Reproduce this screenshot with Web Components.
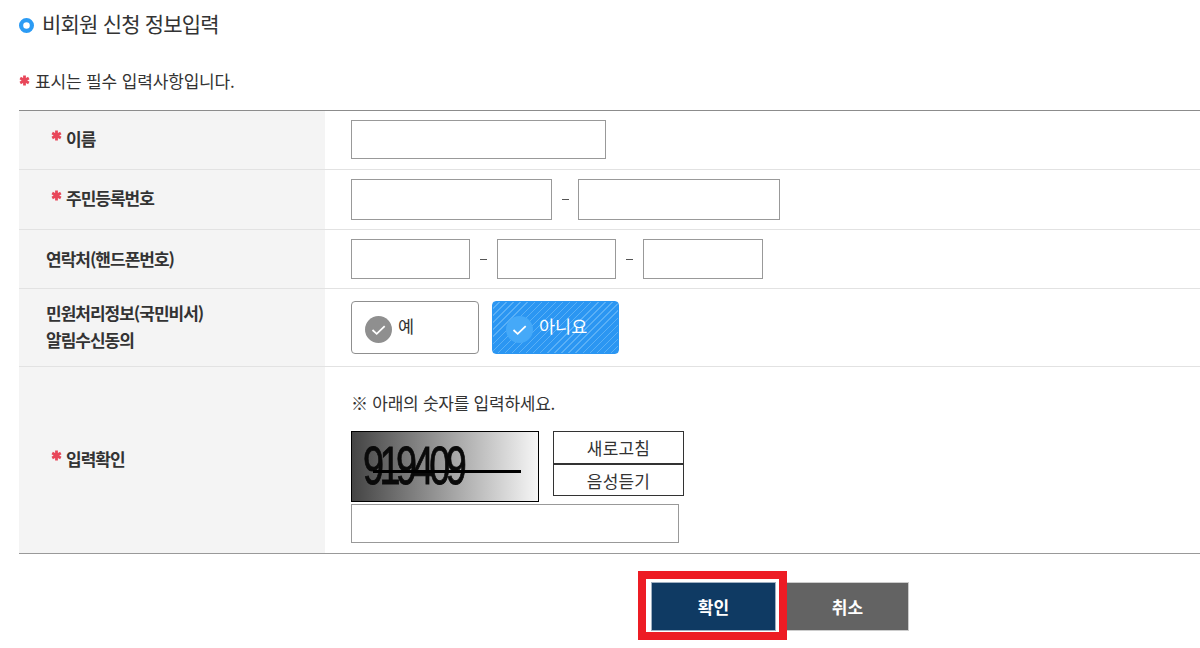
<!DOCTYPE html>
<html lang="ko">
<head>
<meta charset="utf-8">
<title>비회원 신청 정보입력</title>
<style>
  html, body { margin: 0; padding: 0; background: #fff; }
  body { font-family: "Noto Sans CJK KR", "Noto Sans", sans-serif; color: #333; overflow: hidden; height: 648px; }
  apply-form { display: block; }
</style>
</head>
<body>
<apply-form>
  <req-note></req-note>
  <form-row label="이름" required h="59" lift="1">
    <text-box w="255" h="39"></text-box>
  </form-row>
  <form-row label="주민등록번호" required h="60">
    <text-box w="201" h="41"></text-box><dash-mark w="26"></dash-mark><text-box w="202" h="41"></text-box>
  </form-row>
  <form-row label="연락처(핸드폰번호)" h="59" drop="2">
    <text-box w="119" h="40"></text-box><dash-mark w="27"></dash-mark><text-box w="119" h="40"></text-box><dash-mark w="27"></dash-mark><text-box w="120" h="40"></text-box>
  </form-row>
  <form-row label="민원처리정보(국민비서)<br>알림수신동의" h="78" gap="13">
    <choice-btn>예</choice-btn><choice-btn on>아니요</choice-btn>
  </form-row>
  <form-row label="입력확인" required h="186" last>
    <captcha-box></captcha-box>
  </form-row>
</apply-form>
<btn-bar></btn-bar>

<script>
const STAR = `<svg width="11" height="11" viewBox="0 0 11 11"><g stroke="#e8475a" stroke-width="2.8" stroke-linecap="butt"><path d="M5.5 .6v9.8M1.2 3l8.6 5M9.8 3L1.2 8"/></g></svg>`;

class ApplyForm extends HTMLElement {
  constructor() {
    super();
    this.attachShadow({ mode: 'open' });
    this.shadowRoot.innerHTML = `
      <style>
        :host { display: block; padding-left: 19px; }
        h2 { margin: 0; height: 46px; display: flex; align-items: center; gap: 8px; font-size: 21px; font-weight: 400; letter-spacing: -0.8px; color: #333; }
        .dot { display: block; margin-top: 4px; flex: none; }
        .tbl { border-top: 1px solid #8c8c8c; border-bottom: 1px solid #999; }
      </style>
      <h2><svg class="dot" width="15" height="15" viewBox="0 0 15 15"><circle cx="7.5" cy="7.5" r="5.4" fill="none" stroke="#2b9bf4" stroke-width="4.2"/></svg>비회원 신청 정보입력</h2>
      <slot name="note"></slot>
      <div class="tbl"><slot></slot></div>`;
  }
  connectedCallback() {
    const note = this.querySelector('req-note');
    if (note) note.slot = 'note';
  }
}
customElements.define('apply-form', ApplyForm);

class ReqNote extends HTMLElement {
  constructor() {
    super();
    this.attachShadow({ mode: 'open' });
    this.shadowRoot.innerHTML = `
      <style>
        :host { display: flex; align-items: center; gap: 5px; height: 64px; padding-top: 5px; box-sizing: border-box; font-size: 17px; letter-spacing: -0.15px; color: #333; }
        svg { display: block; }
      </style>${STAR}<span>표시는 필수 입력사항입니다.</span>`;
  }
}
customElements.define('req-note', ReqNote);

class FormRow extends HTMLElement {
  constructor() {
    super();
    this.attachShadow({ mode: 'open' });
  }
  connectedCallback() {
    const req = this.hasAttribute('required');
    const h = this.getAttribute('h');
    const gap = this.getAttribute('gap') || 0;
    const lift = this.getAttribute('lift') || 0;
    const pad = 4 - (this.getAttribute('drop') || 0);
    this.shadowRoot.innerHTML = `
      <style>
        :host { display: grid; grid-template-columns: 306px 1fr; height: ${h}px; box-sizing: border-box; ${this.hasAttribute('last') ? '' : 'border-bottom: 1px solid #e2e2e2;'} }
        .th { background: #f4f4f4; display: flex; align-items: center; padding: 0 0 ${pad}px ${req ? 32 : 27}px; gap: 4px; font-size: 17px; font-weight: 700; letter-spacing: -1px; line-height: 27px; color: #333; }
        .th svg { margin-top: -5px; flex: none; }
        .td { display: flex; align-items: center; padding: 0 0 ${lift}px 26px; gap: ${gap}px; }
      </style>
      <div class="th">${req ? STAR : ''}<span>${this.getAttribute('label')}</span></div>
      <div class="td"><slot></slot></div>`;
  }
}
customElements.define('form-row', FormRow);

class TextBox extends HTMLElement {
  constructor() {
    super();
    this.attachShadow({ mode: 'open' });
  }
  connectedCallback() {
    this.shadowRoot.innerHTML = `
      <style>
        :host { display: block; width: ${this.getAttribute('w')}px; height: ${this.getAttribute('h')}px; box-sizing: border-box; border: 1px solid #999; background: #fff; }
      </style>`;
  }
}
customElements.define('text-box', TextBox);

class DashMark extends HTMLElement {
  constructor() {
    super();
    this.attachShadow({ mode: 'open' });
  }
  connectedCallback() {
    this.shadowRoot.innerHTML = `
      <style>
        :host { display: flex; width: ${this.getAttribute('w')}px; justify-content: center; }
        i { display: block; width: 7px; height: 1px; background: #555; }
      </style><i></i>`;
  }
}
customElements.define('dash-mark', DashMark);

class ChoiceBtn extends HTMLElement {
  constructor() {
    super();
    this.attachShadow({ mode: 'open' });
    this.shadowRoot.innerHTML = `
      <style>
        :host { display: flex; align-items: flex-start; gap: 6px; width: 128px; height: 53px; box-sizing: border-box; padding: 13px 0 0 13px; border: 1px solid #8f8f8f; border-radius: 4px; background: #fff; font-size: 17.5px; color: #333; }
        :host([on]) { width: 127px; border-color: #2b96f2; color: #fff; background: repeating-linear-gradient(135deg, #2b96f2 0 4px, #5ab0f6 4px 5px); }
        svg { display: block; flex: none; margin-top: 1px; }
        span { line-height: 24px; margin-top: -1px; }
        .c { fill: #8f8f8f; }
        :host([on]) .c { fill: #45a9f8; }
      </style>
      <svg width="27" height="27" viewBox="0 0 27 27"><circle class="c" cx="13.5" cy="13.5" r="13.5"/><path d="M7.5 14l4.2 3.8 8-7.6" fill="none" stroke="#fff" stroke-width="1.8"/></svg>
      <span><slot></slot></span>`;
  }
}
customElements.define('choice-btn', ChoiceBtn);

class CaptchaBox extends HTMLElement {
  constructor() {
    super();
    this.attachShadow({ mode: 'open' });
    this.shadowRoot.innerHTML = `
      <style>
        :host { display: block; font-size: 17px; color: #333; padding-top: 14px; }
        .tip { height: 24px; line-height: 24px; margin: 0 0 16px; letter-spacing: -0.25px; }
        .top { display: flex; gap: 14px; align-items: flex-start; }
        .img { position: relative; width: 188px; height: 71px; box-sizing: border-box; border: 1px solid #000; overflow: hidden; background: linear-gradient(90deg, #444, #f6f6f6); }
        .img b { position: absolute; left: 11px; top: 10px; font-family: "Liberation Sans", sans-serif; font-size: 54px; line-height: 46px; font-weight: 400; letter-spacing: -6.4px; color: #0a0a0a; white-space: nowrap; transform: scaleX(.7); transform-origin: 0 0; -webkit-text-stroke: .9px #0a0a0a; filter: blur(.3px); }
        .img i { position: absolute; left: 21px; top: 38px; width: 148px; height: 3px; background: #000; }
        .btns { display: flex; flex-direction: column; width: 131px; }
        .btns span { display: flex; align-items: center; justify-content: center; height: 33px; box-sizing: border-box; border: 1px solid #333; letter-spacing: 0.2px; }
        .btns span + span { height: 32px; }
        .inp { margin-top: 2px; }
      </style>
      <p class="tip">※ 아래의 숫자를 입력하세요.</p>
      <div class="top">
        <div class="img"><b>919409</b><i></i></div>
        <div class="btns"><span>새로고침</span><span>음성듣기</span></div>
      </div>
      <text-box class="inp" w="328" h="39"></text-box>`;
  }
}
customElements.define('captcha-box', CaptchaBox);

class BtnBar extends HTMLElement {
  constructor() {
    super();
    this.attachShadow({ mode: 'open' });
    this.shadowRoot.innerHTML = `
      <style>
        :host { display: flex; align-items: flex-start; padding: 17px 0 0 638px; }
        .mark { box-sizing: border-box; width: 149px; height: 69px; border: 8px solid #ed1c24; padding: 3px 3px 1px 5px; background: #fff; }
        .btn { display: flex; align-items: center; justify-content: center; font-size: 17px; font-weight: 700; color: #fff; box-sizing: border-box; }
        .ok { width: 125px; height: 49px; background: #0f3a63; border: 1px solid #9fb0c2; }
        .no { width: 122px; height: 49px; background: #636363; border: 1px solid #ccc; border-left: 0; margin-top: 11px; }
      </style>
      <div class="mark"><div class="btn ok">확인</div></div>
      <div class="btn no">취소</div>`;
  }
}
customElements.define('btn-bar', BtnBar);
</script>
</body>
</html>
